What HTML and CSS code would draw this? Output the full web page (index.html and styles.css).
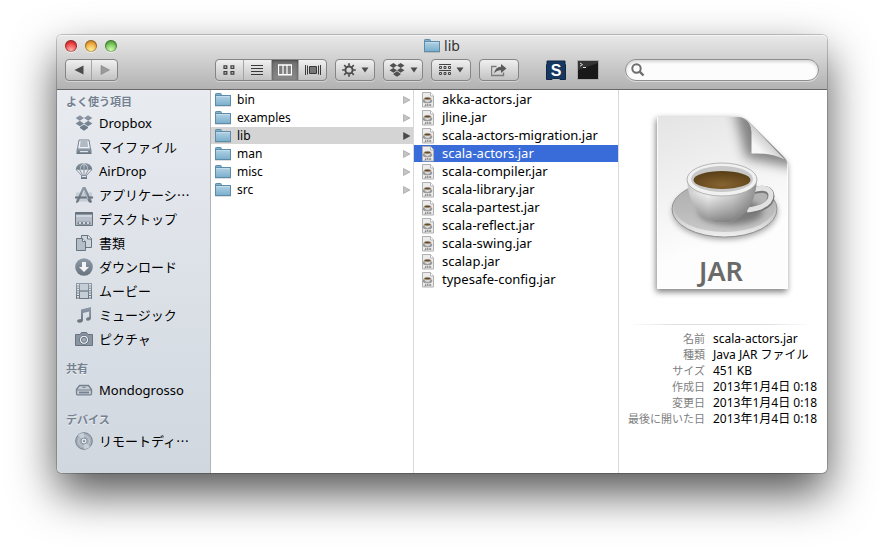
FILE: index.html
```html
<!DOCTYPE html>
<html lang="ja">
<head>
<meta charset="utf-8">
<meta name="viewport" content="width=device-width, initial-scale=1">
<title>lib</title>
<link rel="stylesheet" href="styles.css">
</head>
<body>
<svg class="defs" aria-hidden="true">
  <defs>
    <linearGradient id="gFolder" x1="0" y1="0" x2="0" y2="1"><stop offset="0" stop-color="#b3d3e6"/><stop offset="1" stop-color="#7aaecb"/></linearGradient>
    <linearGradient id="gSide" x1="0" y1="0" x2="0" y2="1"><stop offset="0" stop-color="#8f9aa8"/><stop offset="1" stop-color="#67737f"/></linearGradient>
    <linearGradient id="gPage" x1="0" y1="0" x2="0.3" y2="1"><stop offset="0" stop-color="#e4e4e4"/><stop offset=".8" stop-color="#fdfdfd"/></linearGradient>
    <linearGradient id="gCup" x1="0" y1="0" x2="1" y2="0"><stop offset="0" stop-color="#c9c9c9"/><stop offset=".3" stop-color="#f4f4f4"/><stop offset=".65" stop-color="#d2d2d2"/><stop offset="1" stop-color="#8e8e8e"/></linearGradient>
    <linearGradient id="gCupShade" x1="0" y1="0" x2="0" y2="1"><stop offset=".35" stop-color="#555" stop-opacity="0"/><stop offset="1" stop-color="#444" stop-opacity=".6"/></linearGradient>
    <linearGradient id="gSaucer" x1="0" y1="0" x2="0" y2="1"><stop offset="0" stop-color="#a2a2a2"/><stop offset=".55" stop-color="#c4c4c4"/><stop offset="1" stop-color="#f0f0f0"/></linearGradient>
    <radialGradient id="gCoffee" cx=".5" cy=".75" r=".7"><stop offset="0" stop-color="#866330"/><stop offset="1" stop-color="#5a3f17"/></radialGradient>
    <linearGradient id="gFold" x1="0" y1="1" x2=".8" y2=".2"><stop offset="0" stop-color="#fff"/><stop offset=".4" stop-color="#f6f6f6"/><stop offset=".65" stop-color="#d0d0d0"/></linearGradient>
    <filter id="blur2" x="-30%" y="-30%" width="160%" height="160%"><feGaussianBlur stdDeviation="3"/></filter>
    <filter id="blur6" x="-50%" y="-50%" width="200%" height="200%"><feGaussianBlur stdDeviation="6"/></filter>
    <symbol id="folder" viewBox="0 0 16 16">
      <path d="M.5 3.500V2.200q0-.7.7-.7h4.400q.7 0 .7.7v1.300z" fill="#86b2cd" stroke="#5b8daa"/>
      <rect x=".5" y="3.500" width="15" height="10" fill="url(#gFolder)" stroke="#5b8daa"/>
      <path d="M1 4.500h14" stroke="#c3dcea"/>
      <path d="M0 14.500h16" stroke="#000" stroke-opacity=".13"/>
    </symbol>
    <symbol id="jar" viewBox="0 0 14 16">
      <path d="M1.500.5h8l3 3.500v11h-11z" fill="#ececec" stroke="#b0b0b0"/>
      <path d="M9.500.5V4h3" fill="#fff" stroke="#a7a7a7" stroke-width=".8"/>
      <ellipse cx="6.500" cy="9" rx="4.800" ry="2.300" fill="#989898"/>
      <path d="M3 6.500q0 4 3.500 4t3.500-4z" fill="#ddd" stroke="#888" stroke-width=".6"/>
      <ellipse cx="6.500" cy="6.500" rx="3.200" ry="1.300" fill="#6b4a20" stroke="#bbb" stroke-width=".5"/>
      <path d="M3.500 14h1v-1.800M6 14v-1.600h1V14M8.700 14v-1.600h1V14" fill="none" stroke="#777" stroke-width=".8"/>
    </symbol>
    <symbol id="dropbox" viewBox="0 0 18 18">
      <path d="M5 1.200 9 4 4.800 6.700.6 4zM13 1.200 17.400 4l-4.200 2.700L9 4zM.6 9.400l4.200-2.700L9 9.400 5 12.200zM9 9.400l4.200-2.700 4.200 2.700-4.400 2.800zM5 13.100l4-2.700 4 2.700v1L9 16.700l-4-2.600z"/>
    </symbol>
    <symbol id="right" viewBox="0 0 8 8"><path d="M.5.5 7 4 .5 7.500z"/></symbol>
    <symbol id="down" viewBox="0 0 8 6"><path d="M.5.5h7L4 5.500z"/></symbol>
  </defs>
</svg>

<main class="window">
  <header class="header">
    <div class="titlebar">
      <div class="lights">
        <button class="light light-red" aria-label="閉じる"></button>
        <button class="light light-yellow" aria-label="しまう"></button>
        <button class="light light-green" aria-label="拡大"></button>
      </div>
      <h1 class="title"><svg class="icon16"><use href="#folder"/></svg>lib</h1>
    </div>
    <div class="toolbar">
      <div class="group nav">
        <button aria-label="戻る"><svg width="10" height="10" viewBox="0 0 10 10"><path d="M9.500.5v9L.5 5z" fill="#4c4c4c"/></svg></button>
        <button aria-label="進む"><svg width="10" height="10" viewBox="0 0 10 10"><path d="M1 .5v9L9.500 5z" fill="#9a9a9a" stroke="#858585" stroke-width=".6"/></svg></button>
      </div>
      <div class="group views">
        <button aria-label="アイコン"><svg width="12" height="10" viewBox="0 0 12 10" fill="none" stroke="#3f3f3f" stroke-width="1.200"><path d="M1 .8h2.800v2.600H1zM8 .8h2.800v2.600H8zM1 6.600h2.800v2.600H1zM8 6.600h2.800v2.600H8z"/></svg></button>
        <button aria-label="リスト"><svg width="12" height="10" viewBox="0 0 12 10" stroke="#3a3a3a"><path d="M0 .5h12M0 3.500h12M0 6.500h12M0 9.500h12"/></svg></button>
        <button class="on" aria-label="カラム" aria-pressed="true"><svg width="14" height="12" viewBox="0 0 14 12" fill="none" stroke="#fff"><path d="M.5 1v10M13.500 1v10M5 1v10M9 1v10" stroke-width="1.200"/><path d="M0 1h14M0 10.800h14" stroke-width="1.600"/></svg></button>
        <button aria-label="Cover Flow"><svg width="16" height="10" viewBox="0 0 16 10" stroke="#3a3a3a"><path d="M.5 0v10M2.500.5v9M13.500.5v9M15.500 0v10"/><path d="M4.500 1.500h7v7h-7z" fill="#777"/></svg></button>
      </div>
      <button class="btn" aria-label="アクション"><svg width="14" height="14" viewBox="0 0 14 14" fill="none" stroke="#4b4b4b"><circle cx="7" cy="7" r="3.600" stroke-width="2"/><path d="M7 .2v2.600M7 11.200v2.600M.2 7h2.600M11.200 7h2.600M2.200 2.200 4 4M10 10l1.800 1.800M11.800 2.200 10 4M4 10l-1.800 1.800" stroke-width="1.700"/></svg><svg class="caret"><use href="#down"/></svg></button>
      <button class="btn" aria-label="Dropbox"><svg class="tool-dropbox"><use href="#dropbox"/></svg><svg class="caret"><use href="#down"/></svg></button>
      <button class="btn" aria-label="項目の並び順序"><svg width="12" height="12" viewBox="0 0 12 12" fill="none" stroke="#444"><path d="M0 .5h12M0 6.500h12"/><path d="M.5 2.500h2v2h-2zM5 2.500h2v2H5zM9.500 2.500h2v2h-2zM.5 8.500h2v2h-2zM5 8.500h2v2H5zM9.500 8.500h2v2h-2z"/></svg><svg class="caret"><use href="#down"/></svg></button>
      <button class="btn share" aria-label="共有"><svg width="16" height="14" viewBox="0 0 16 14"><path d="M5.500 3.500h-5v9h12V9.500" fill="none" stroke="#7c7c7c" stroke-width="1.400"/><path d="M3.200 10.500Q4 4 10 3.800V1l5.500 4.600L10 10V7.200Q6 7 3.200 10.500z" fill="#5c5c5c"/></svg></button>
      <button class="app app-s" aria-label="Sublime">
        <svg width="20" height="20" viewBox="0 0 20 20"><path d="M1 1h18v3l.5.5v15H14l-1-1H7l-1 1H.5v-15L1 4z" fill="#17375e" stroke="#0f2746"/><text class="s-letter" x="10" y="15.500" text-anchor="middle">S</text></svg>
      </button>
      <button class="app app-term" aria-label="ターミナル">
        <svg width="24" height="22" viewBox="0 0 24 22"><rect x="1" y="1" width="22" height="20" fill="#a9a9a9"/><rect x="2" y="2" width="20" height="18" fill="#191919"/><path d="M2 11 22 4V2H2z" fill="#343434"/><path d="m4 4 2.500 1.600L4 7.200M7 8.500h3" fill="none" stroke="#ddd"/></svg>
      </button>
      <label class="search">
        <svg width="14" height="14" viewBox="0 0 14 14" fill="none" stroke="#6d6d6d"><circle cx="5.500" cy="5.500" r="4.200" stroke-width="2"/><path d="m8.700 8.700 3.800 3.800" stroke-width="2.400"/></svg>
        <input type="search" aria-label="検索">
      </label>
    </div>
  </header>

  <div class="body">
    <nav class="sidebar">
      <section>
        <h2>よく使う項目</h2>
        <a href="#"><svg><use href="#dropbox"/></svg>Dropbox</a>
        <a href="#"><svg viewBox="0 0 18 18"><path d="M4 2h10l1.500 9h-13z" fill="#eef1f5" stroke="#75818f"/><path d="M5.500 4h7M5.300 6h7.500M5 8h8" stroke="#75818f"/><path d="M1.500 11h15v5h-15z"/><path d="M5 13h8v1.200H5z" fill="#dfe4ea"/></svg>マイファイル</a>
        <a href="#"><svg viewBox="0 0 18 18"><path d="M.7 8Q1.200 1 9 1t8.300 7Q15 6.800 13.500 8.200 11.500 6.800 9 8.200 6.500 6.800 4.500 8.200 3 6.800.7 8z"/><path d="M5 8Q5 3 9 1.400 13 3 13 8M9 1.500V8" fill="none" stroke="#d9dfe6" stroke-width=".7"/><path d="m1.500 8 5 5.500M4.800 8l2.600 5M9 8v5M13.200 8l-2.600 5M16.500 8l-5 5.500" fill="none" stroke="#75818f" stroke-width=".8"/><path d="M6 13h6v4H6z"/><path d="M7 14.500h4" stroke="#dfe4ea"/></svg>AirDrop</a>
        <a href="#"><svg viewBox="0 0 18 18"><path d="M1 6.500h16v9H1z" fill="#a9b3be" opacity=".5"/><path d="M8 1h2.500L17 16l-1.500 1-1.800-1L8.500 5z"/><path d="M10 1 3.500 16 1 17.300 1.300 15 7.800 1z"/><path d="M0 11.500h18" stroke="#67737f" stroke-width="2"/><path d="M8.800 4 13 13" stroke="#dfe4ea" stroke-width=".7"/></svg><span>アプリケーシ<span class="cjk">…</span></span></a>
        <a href="#"><svg viewBox="0 0 18 18"><path d="M.5 2.500h17v13H.5z" fill="#b7c0ca" stroke="#67737f"/><path d="M1 3.500h16" stroke="#67737f" stroke-width="2"/><path d="M1 6h16" stroke="#e8ecf1"/><path d="M2.500 11.500h13v3h-13z"/><path d="M4 13h2M8 13h2M12 13h2" stroke="#eef1f5" stroke-width="1.500"/></svg>デスクトップ</a>
        <a href="#"><svg viewBox="0 0 18 18"><path d="M6.500 1.500H13l3.500 3v9h-10z" fill="#cdd4dc" stroke="#67737f"/><path d="M1.500 4.500h6l3 3v9h-9z" fill="#b4bec9" stroke="#67737f"/><path d="M7.500 4.500v3h3M12.500 1.500v3.500h4" fill="#eef1f5" stroke="#67737f"/></svg>書類</a>
        <a href="#"><svg viewBox="0 0 18 18"><circle cx="9" cy="9" r="8.800"/><path d="M7 4h4v5h3l-5 5-5-5h3z" fill="#f2f4f7"/></svg>ダウンロード</a>
        <a href="#"><svg viewBox="0 0 18 18"><path d="M1 1h16v16H1z"/><path d="M5 2h8v6.300H5zM5 9.700h8V16H5z" fill="#c5cdd6"/><path d="M3 2v15M15 2v15" stroke="#eef1f5" stroke-width="1.800" stroke-dasharray="1.400 1"/></svg>ムービー</a>
        <a href="#"><svg viewBox="0 0 18 18"><path d="M6 3.500 16 1v11.500q-.3 2-2.800 2.300-2.200 0-2.200-1.500 0-2 3.200-2.300V5.500L8 7v7.500q-.3 2-2.800 2.300Q2 17 2 15q.3-2 4-2z"/></svg>ミュージック</a>
        <a href="#"><svg viewBox="0 0 18 18"><path d="M.5 4.500H5L6.500 2.500h5L13 4.500h4.500v11H.5z" fill="#8995a2" stroke="#67737f"/><circle cx="9" cy="9.800" r="4.600" fill="#e9edf1" stroke="#67737f"/><circle cx="9" cy="9.800" r="2.500" fill="#a1acb8" stroke="#67737f"/></svg>ピクチャ</a>
      </section>
      <section>
        <h2>共有</h2>
        <a href="#"><svg viewBox="0 0 18 18"><path d="M1.500 8.500 4.500 4.500h9l3 4v4.300q0 1-1 1h-13q-1 0-1-1z" fill="#c5cdd6" stroke="#75818f" stroke-width="1.300"/><path d="M2 9h14" stroke="#75818f"/><path d="M4 11.500h10" stroke="#75818f" stroke-width="1.800"/><path d="M7.500 6.300h3" stroke="#75818f"/></svg>Mondogrosso</a>
      </section>
      <section>
        <h2>デバイス</h2>
        <a href="#"><svg viewBox="0 0 18 18"><circle cx="9" cy="9" r="8.300" fill="#a4afba" stroke="#75818f"/><path d="M9 9 3 3.200Q6 .7 9 1zM9 9l6 5.800Q12 17.300 9 17z" fill="#c8d0d8"/><circle cx="9" cy="9" r="5.400" fill="none" stroke="#c5cdd6"/><circle cx="9" cy="9" r="3" fill="#dfe4ea" stroke="#8995a2"/><circle cx="9" cy="9" r="1.100"/></svg><span>リモートディ<span class="cjk">…</span></span></a>
      </section>
    </nav>

    <div class="column folders">
      <a href="#"><svg class="icon16"><use href="#folder"/></svg><span>bin</span><svg class="chev"><use href="#right"/></svg></a>
      <a href="#"><svg class="icon16"><use href="#folder"/></svg><span>examples</span><svg class="chev"><use href="#right"/></svg></a>
      <a href="#" class="open"><svg class="icon16"><use href="#folder"/></svg><span>lib</span><svg class="chev"><use href="#right"/></svg></a>
      <a href="#"><svg class="icon16"><use href="#folder"/></svg><span>man</span><svg class="chev"><use href="#right"/></svg></a>
      <a href="#"><svg class="icon16"><use href="#folder"/></svg><span>misc</span><svg class="chev"><use href="#right"/></svg></a>
      <a href="#"><svg class="icon16"><use href="#folder"/></svg><span>src</span><svg class="chev"><use href="#right"/></svg></a>
    </div>

    <div class="column files">
      <a href="#"><svg class="jar"><use href="#jar"/></svg><span>akka-actors.jar</span></a>
      <a href="#"><svg class="jar"><use href="#jar"/></svg><span>jline.jar</span></a>
      <a href="#"><svg class="jar"><use href="#jar"/></svg><span>scala-actors-migration.jar</span></a>
      <a href="#" class="selected"><svg class="jar"><use href="#jar"/></svg><span>scala-actors.jar</span></a>
      <a href="#"><svg class="jar"><use href="#jar"/></svg><span>scala-compiler.jar</span></a>
      <a href="#"><svg class="jar"><use href="#jar"/></svg><span>scala-library.jar</span></a>
      <a href="#"><svg class="jar"><use href="#jar"/></svg><span>scala-partest.jar</span></a>
      <a href="#"><svg class="jar"><use href="#jar"/></svg><span>scala-reflect.jar</span></a>
      <a href="#"><svg class="jar"><use href="#jar"/></svg><span>scala-swing.jar</span></a>
      <a href="#"><svg class="jar"><use href="#jar"/></svg><span>scalap.jar</span></a>
      <a href="#"><svg class="jar"><use href="#jar"/></svg><span>typesafe-config.jar</span></a>
    </div>

    <section class="preview">
      <svg class="doc" viewBox="11 0 164 204">
        <path d="M26 19h84l47 45v128H26z" fill="#000" opacity=".5" filter="url(#blur2)"/>
        <clipPath id="pageClip"><path d="M27 17h81q6 0 11 5l34 34q5 5 5 10v123H27z"/></clipPath>
        <g clip-path="url(#pageClip)">
          <path d="M27 17h131v172H27z" fill="url(#gPage)"/>
          <path d="M104 8 116 58l50 10V8z" fill="#555" opacity=".7" filter="url(#blur6)"/>
          <path d="M27.500 17v171.500h130V60" fill="none" stroke="#fff" stroke-opacity=".8"/>
        </g>
        <path d="M112 18q9 3 9.500 14v21.500q20-1 33 6L119 22q-3-3-7-4z" fill="url(#gFold)"/>
        <ellipse cx="95" cy="112" rx="52" ry="27" fill="#000" opacity=".4" filter="url(#blur2)"/>
        <ellipse cx="94.500" cy="109" rx="52.500" ry="28" fill="url(#gSaucer)" stroke="#858585" stroke-width=".8"/>
        <ellipse cx="94.500" cy="107" rx="50.500" ry="25" fill="#b4b4b4" opacity=".6"/>
        <ellipse cx="101" cy="112" rx="32" ry="13" fill="#444" opacity=".55" filter="url(#blur2)"/>
        <path d="M122 91q18-5 19 5 0 12-24 15" fill="none" stroke="#777" stroke-width="7"/>
        <path d="M122 90q18-5 19 5 0 12-24 15" fill="none" stroke="#e2e2e2" stroke-width="5"/>
        <path d="M57 78q1 23 12 35 9 9.500 23 9.500t23-9.500q11-12 12-35z" fill="url(#gCup)"/>
        <path d="M57 78q1 23 12 35 9 9.500 23 9.500t23-9.500q11-12 12-35z" fill="url(#gCupShade)"/>
        <ellipse cx="92" cy="79.500" rx="35" ry="16.500" fill="#f1f1f1" stroke="#a5a5a5" stroke-width=".8"/>
        <ellipse cx="92" cy="79" rx="31" ry="13" fill="#c8c8c8"/>
        <ellipse cx="92" cy="80" rx="28.500" ry="9" fill="url(#gCoffee)"/>
        <text class="doc-text" x="91" y="181" text-anchor="middle">JAR</text>
      </svg>
      <hr>
      <dl>
        <dt>名前</dt><dd>scala-actors.jar</dd>
        <dt>種類</dt><dd>Java JAR ファイル</dd>
        <dt>サイズ</dt><dd>451 KB</dd>
        <dt>作成日</dt><dd>2013年1月4日 0:18</dd>
        <dt>変更日</dt><dd>2013年1月4日 0:18</dd>
        <dt>最後に開いた日</dt><dd>2013年1月4日 0:18</dd>
      </dl>
    </section>
  </div>
</main>
</body>
</html>
```

FILE: styles.css
```css
* { box-sizing: border-box; }

body {
  margin: 0;
  min-height: 100vh;
  padding: 35px 57px 79px;
  display: flex;
  background: #fff;
  color: #000;
  font-family: "Noto Sans", "Noto Sans CJK JP", sans-serif;
  font-size: 12px;
}

a { color: inherit; text-decoration: none; }
button { margin: 0; padding: 0; border: 0; background: none; font: inherit; }
svg { display: block; flex: none; }
.defs { position: absolute; width: 0; height: 0; }
.icon16 { width: 16px; height: 16px; }
.cjk { font-family: "Noto Sans CJK JP", sans-serif; }

.window {
  flex: 1;
  min-width: 0;
  display: flex;
  flex-direction: column;
  border-radius: 5px;
  background: #fff;
  box-shadow: 0 0 0 1px rgba(0, 0, 0, .2), 0 20px 45px rgba(0, 0, 0, .68);
}

.header {
  border-bottom: 1px solid #686868;
  border-radius: 5px 5px 0 0;
  padding: 0 8px 8px;
  background: linear-gradient(#e9e9e9, #b2b2b2);
  box-shadow: inset 0 1px #f6f6f6;
}

.titlebar {
  height: 24px;
  padding-bottom: 2px;
  display: grid;
  grid-template-columns: 1fr auto 1fr;
  align-items: center;
}

.lights { display: flex; gap: 8px; }
.light {
  width: 12px;
  height: 12px;
  border-radius: 50%;
  box-shadow: 0 1px rgba(255, 255, 255, .6), inset 0 0 0 1px rgba(0, 0, 0, .25), inset 0 2px 2px rgba(0, 0, 0, .2);
}
.light-red { background: radial-gradient(circle at 50% 85%, #ffb5ad, #ee3d3e 60%); }
.light-yellow { background: radial-gradient(circle at 50% 85%, #fff3a0, #f0a63a 60%); }
.light-green { background: radial-gradient(circle at 50% 85%, #d5ffb5, #6cbf50 60%); }

.title {
  margin: 0;
  display: flex;
  align-items: center;
  gap: 4px;
  font-size: 14px;
  font-weight: 400;
  line-height: 20px;
  color: #333;
}

.toolbar { display: flex; align-items: center; gap: 8px; height: 22px; }

.group, .btn {
  height: 22px;
  border: 1px solid #858585;
  border-radius: 4px;
  background: linear-gradient(#f0f0f0, #c2c2c2);
  box-shadow: 0 1px rgba(255, 255, 255, .4);
}
.group { display: flex; overflow: hidden; }
.group button { flex: 1; display: flex; align-items: center; justify-content: center; }
.group button + button { border-left: 1px solid #a5a5a5; }
.nav { width: 53px; }
.views { width: 112px; margin-left: 89px; }
.group .on { background: linear-gradient(#707070, #8a8a8a); box-shadow: inset 0 1px 3px rgba(0, 0, 0, .4); }

.btn { width: 40px; display: flex; align-items: center; justify-content: center; gap: 5px; }
.caret { width: 8px; height: 6px; fill: #4b4b4b; }
.tool-dropbox { width: 16px; height: 16px; fill: #505050; }

.app { display: flex; }
.app-s { margin-left: 19px; }
.app-term { margin-left: 2px; }
.s-letter { font: 700 16px "Liberation Sans Narrow", "Liberation Sans", sans-serif; fill: #fff; }

.search {
  width: 194px;
  height: 22px;
  margin-left: auto;
  padding: 0 5px;
  display: flex;
  align-items: center;
  gap: 4px;
  border: 1px solid #8e8e8e;
  border-radius: 11px;
  background: #fcfcfc;
  box-shadow: 0 1px rgba(255, 255, 255, .5), inset 0 2px 3px rgba(0, 0, 0, .15);
}
.search input { flex: 1; min-width: 0; border: 0; outline: 0; padding: 0; background: none; font: inherit; }

.body { flex: 1; display: flex; min-height: 0; }

.sidebar {
  width: 154px;
  padding: 3px 0 0 9px;
  display: flex;
  flex-direction: column;
  gap: 9px;
  border-right: 1px solid #b4b4b4;
  border-radius: 0 0 0 5px;
  background: linear-gradient(#e8ebf0, #d0d7df);
  font-size: 13px;
}
.sidebar h2 {
  margin: 0;
  font-size: 11px;
  font-weight: 700;
  line-height: 18px;
  color: #748190;
  text-shadow: 0 1px rgba(255, 255, 255, .7);
}
.sidebar a {
  height: 24px;
  padding-left: 9px;
  display: flex;
  align-items: center;
  gap: 6px;
  line-height: 18px;
  white-space: nowrap;
}
.sidebar a svg { width: 18px; height: 18px; fill: url(#gSide); }

.column {
  padding-top: 1px;
  display: flex;
  flex-direction: column;
  gap: 1px;
  border-right: 1px solid #d9d9d9;
}
.column a { height: 17px; display: flex; align-items: center; white-space: nowrap; line-height: 17px; }
.folders { width: 203px; }
.folders a { padding: 0 2px 0 4px; gap: 6px; }
.folders span { flex: 1; }
.chev { width: 8px; height: 8px; fill: #c4c4c4; stroke: #999; stroke-width: .6; }
.folders .open { background: #d4d4d4; }
.open .chev { fill: #4a4a4a; stroke: #4a4a4a; }
.files { width: 205px; font-size: 13px; }
.files a { padding-left: 7px; gap: 7px; }
.jar { width: 14px; height: 16px; }
.files .selected { background: #3a6cd9; color: #fff; }

.preview { flex: 1; min-width: 0; padding-top: 10px; }
.doc { width: 164px; height: 204px; margin: 0 auto; }
.doc-text { font: 600 27px "Noto Sans", sans-serif; fill: #6a6a6a; }
.preview hr {
  height: 1px;
  margin: 20px 16px 6px 10px;
  border: 0;
  background: linear-gradient(90deg, transparent, #dedede 25%, #dedede 75%, transparent);
}
.preview dl {
  margin: 0;
  display: grid;
  grid-template-columns: 86px 1fr;
  column-gap: 8px;
  font-size: 11px;
  line-height: 16px;
  white-space: nowrap;
}
.preview dt { text-align: right; color: #808080; }
.preview dd { margin: 0; font-size: 12px; }
```
